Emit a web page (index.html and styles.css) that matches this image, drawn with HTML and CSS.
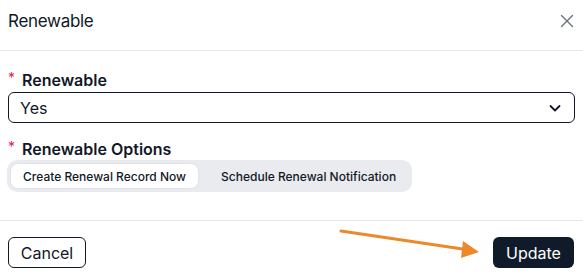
FILE: index.html
```html
<!DOCTYPE html>
<html lang="en">
<head>
    <meta charset="UTF-8">
    <title>Renewable</title>
    <link rel="stylesheet" href="styles.css">
</head>
<body>
    <div class="modal">
        <div class="header">
            <h2 class="title">Renewable</h2>
            <button class="close" aria-label="Close">
                <svg width="14" height="14" viewBox="0 0 14 14"><path d="M1.5 1.5L12.5 12.5M12.5 1.5L1.5 12.5" stroke="#6b7280" stroke-width="1.4" fill="none" stroke-linecap="round"/></svg>
            </button>
        </div>

        <div class="body">
            <label class="label"><span class="req">*</span>Renewable</label>
            <div class="select">
                <span>Yes</span>
                <svg width="14" height="14" viewBox="0 0 14 14"><path d="M2.5 5L7 9.5L11.5 5" stroke="#111827" stroke-width="1.8" fill="none" stroke-linecap="round" stroke-linejoin="round"/></svg>
            </div>

            <label class="label second"><span class="req">*</span>Renewable Options</label>
            <div class="segmented">
                <button class="seg active">Create Renewal Record Now</button>
                <button class="seg">Schedule Renewal Notification</button>
            </div>
        </div>

        <div class="footer">
            <button class="btn cancel">Cancel</button>
            <button class="btn update">Update</button>
        </div>

        <svg class="arrow" width="583" height="280" viewBox="0 0 583 280">
            <line x1="341" y1="231" x2="466" y2="249.5" stroke="#ea8a2a" stroke-width="3" stroke-linecap="round"/>
            <polygon points="479,252 463,241 461,258" fill="#ea8a2a"/>
        </svg>
    </div>
</body>
</html>
```

FILE: styles.css
```css
* {
    box-sizing: border-box;
}

body {
    margin: 0;
    background-color: white;
    font-family: Inter, "Noto Sans", Arial, sans-serif;
    color: #111827;
}

.modal {
    position: relative;
    width: 583px;
    height: 280px;
}

.header {
    display: flex;
    align-items: center;
    justify-content: space-between;
    height: 51px;
    padding: 0 9px 8px 8px;
    border-bottom: 1px solid #e5e7eb;
}

.title {
    margin: 0;
    font-size: 17px;
    font-weight: 400;
    letter-spacing: -0.3px;
    color: #111827;
}

.close {
    display: flex;
    background: none;
    border: none;
    padding: 0;
    cursor: pointer;
}

.body {
    padding: 19px 8px 28px 8px;
}

.label {
    display: flex;
    align-items: center;
    height: 20px;
    font-size: 16px;
    font-weight: 600;
    color: #111827;
}

.label.second {
    margin-top: 16px;
}

.req {
    color: #e11d48;
    font-size: 14px;
    font-weight: 400;
    margin-right: 7px;
    position: relative;
    top: -3px;
}

.select {
    display: flex;
    align-items: center;
    justify-content: space-between;
    height: 31px;
    margin-top: 2px;
    padding: 0 12px 0 11px;
    border: 1px solid #111827;
    border-radius: 6px;
    font-size: 16px;
}

.segmented {
    display: inline-flex;
    gap: 9px;
    margin-top: 1px;
    margin-left: -1px;
    padding: 3px;
    background-color: #e9ebef;
    border-radius: 10px;
}

.seg {
    height: 26px;
    padding: 0 12px;
    border: 1px solid transparent;
    border-radius: 8px;
    background: none;
    font-family: Inter, "Noto Sans", Arial, sans-serif;
    font-size: 12px;
    font-weight: 500;
    color: #111827;
    cursor: pointer;
}

.seg.active {
    background-color: white;
    border-color: #dfe2e7;
}

.footer {
    display: flex;
    justify-content: space-between;
    padding: 16px 9px 0 8px;
    border-top: 1px solid #e5e7eb;
}

.btn {
    height: 31px;
    border-radius: 6px;
    font-family: Inter, "Noto Sans", Arial, sans-serif;
    font-size: 16px;
    cursor: pointer;
}

.cancel {
    width: 78px;
    background: white;
    border: 1px solid #111827;
    color: #111827;
}

.update {
    width: 81px;
    background-color: #0f1b2a;
    border: none;
    color: white;
}

.arrow {
    position: absolute;
    left: 0;
    top: 0;
    pointer-events: none;
}
```
